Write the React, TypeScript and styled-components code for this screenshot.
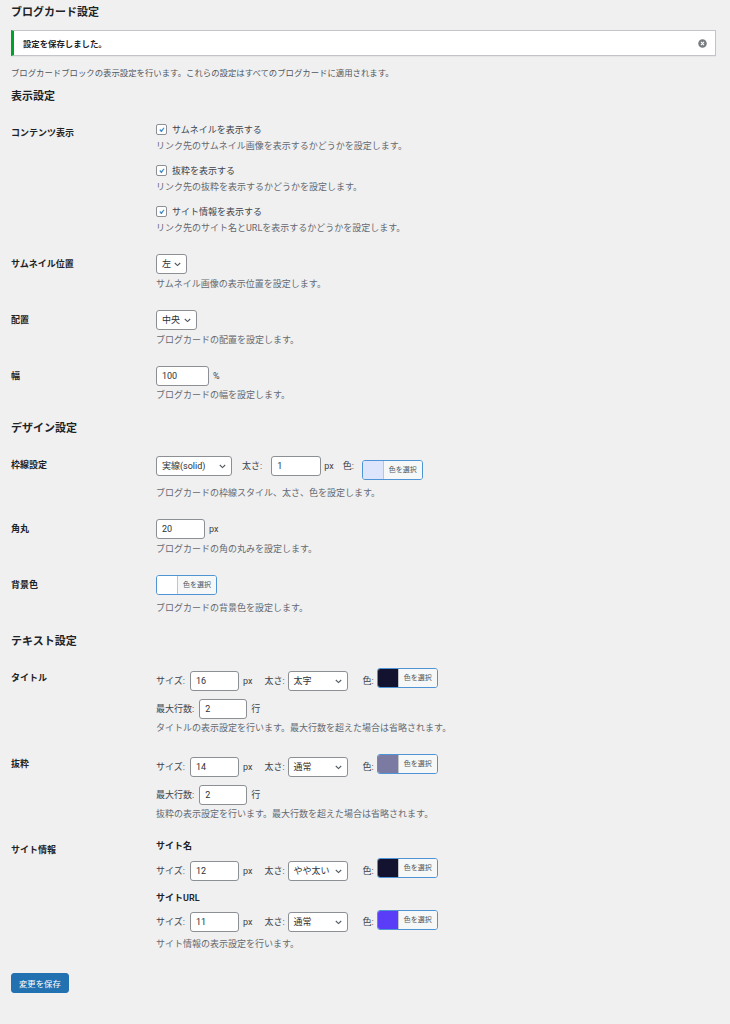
import React from 'react';
import styled, { createGlobalStyle } from 'styled-components';

const GlobalStyle = createGlobalStyle`
  body {
    margin: 0;
    background: #f0f0f1;
    font-family: Roboto, "Noto Sans CJK JP", "Noto Sans", sans-serif;
    color: #3c434a;
  }
  * { box-sizing: border-box; }
`;

const Wrap = styled.div`
  padding: 0 14px 30px 11px;
`;

const PageTitle = styled.h1`
  margin: 0;
  padding-top: 6px;
  font-size: 11px;
  line-height: 14px;
  font-weight: 600;
  color: #1d2327;
`;

const Notice = styled.div`
  margin-top: 10px;
  height: 26px;
  display: flex;
  align-items: center;
  background: #fff;
  border: 1px solid #c3c4c7;
  border-left: 3px solid #00a32a;
  box-shadow: 0 1px 1px rgba(0, 0, 0, 0.04);
  padding: 0 8px 0 9px;
  font-size: 8.4px;
  font-weight: 600;
  color: #1d2327;
`;

const Dismiss = styled.button`
  margin-left: auto;
  border: 0;
  padding: 0;
  background: none;
  display: flex;
  cursor: pointer;
`;

const Intro = styled.p`
  margin: 11px 0 0;
  font-size: 8.4px;
  line-height: 12px;
  color: #50575e;
`;

const SectionTitle = styled.h2`
  margin: 11px 0 9px;
  font-size: 11px;
  line-height: 14px;
  font-weight: 600;
  color: #1d2327;
`;

const Row = styled.div`
  display: flex;
  align-items: flex-start;
`;

const Th = styled.div`
  width: 135px;
  flex: none;
  padding-top: 13.5px;
  font-size: 9px;
  line-height: 12px;
  font-weight: 600;
  color: #1d2327;
`;

const Td = styled.div`
  flex: 1;
  padding: 10px 0 10px 10px;
  font-size: 9px;
  line-height: 12px;
  color: #3c434a;
`;

const Desc = styled.p<{ $mt?: number }>`
  margin: ${p => p.$mt ?? 4}px 0 0;
  font-size: 9px;
  line-height: 12px;
  color: #646970;
`;

const CheckOption = styled.div`
  & + & {
    margin-top: 12px;
  }
`;

const CheckLine = styled.label`
  display: flex;
  align-items: center;
  gap: 5px;
  height: 13px;
  color: #3c434a;
`;

const CheckBox = styled.span`
  width: 11px;
  height: 11px;
  border: 1px solid #8c8f94;
  border-radius: 2px;
  background: #fff;
  display: flex;
  align-items: center;
  justify-content: center;
`;

const ControlLine = styled.div<{ $mt?: number }>`
  display: flex;
  align-items: center;
  height: 20px;
  margin-top: ${p => p.$mt ?? 0}px;
`;

const Inline = styled.span<{ $ml?: number }>`
  margin-left: ${p => p.$ml ?? 0}px;
  white-space: nowrap;
  color: #3c434a;
`;

const SelectBox = styled.div<{ $w: number; $ml?: number }>`
  width: ${p => p.$w}px;
  margin-left: ${p => p.$ml ?? 0}px;
  height: 20px;
  flex: none;
  border: 1px solid #8c8f94;
  border-radius: 3px;
  background: #fff;
  display: flex;
  align-items: center;
  justify-content: space-between;
  padding: 0 5px;
  color: #2c3338;
  white-space: nowrap;
`;

const TextInput = styled.input<{ $w: number; $ml?: number }>`
  width: ${p => p.$w}px;
  margin: 0 0 0 ${p => p.$ml ?? 0}px;
  height: 20px;
  flex: none;
  border: 1px solid #8c8f94;
  border-radius: 3px;
  background: #fff;
  padding: 0 5px;
  font: inherit;
  font-size: 9px;
  color: #2c3338;
  outline: none;
`;

const ColorButton = styled.button<{ $ml?: number; $mt?: number }>`
  display: flex;
  align-self: flex-start;
  flex: none;
  height: 20px;
  margin: ${p => p.$mt ?? 0}px 0 0 ${p => p.$ml ?? 0}px;
  padding: 0;
  border: 1px solid #4f94d4;
  border-radius: 3px;
  overflow: hidden;
  background: #f6f7f7;
  cursor: pointer;
`;

const Swatch = styled.span<{ $color: string }>`
  width: 20px;
  background: ${p => p.$color};
`;

const ColorText = styled.span`
  padding: 0 5px;
  border-left: 1px solid #c3c4c7;
  font-family: Roboto, "Noto Sans CJK JP", sans-serif;
  font-size: 7px;
  line-height: 18px;
  color: #50575e;
  background: #f6f7f7;
`;

const SubHead = styled.div<{ $mt?: number }>`
  margin-top: ${p => p.$mt ?? 0}px;
  font-weight: 600;
  color: #1d2327;
  line-height: 12px;
`;

const SubmitButton = styled.button`
  margin-top: 13px;
  height: 20px;
  padding: 0 7px;
  border: 1px solid #2271b1;
  border-radius: 3px;
  background: #2271b1;
  color: #fff;
  font-family: Roboto, "Noto Sans CJK JP", sans-serif;
  font-size: 8.4px;
  cursor: pointer;
`;

const Chevron = () => (
  <svg width="7" height="5" viewBox="0 0 7 5">
    <path d="M0.8 1l2.7 2.6L6.2 1" stroke="#50575e" strokeWidth="1.1" fill="none" />
  </svg>
);

const Check = () => (
  <svg width="12" height="12" viewBox="0 0 20 20">
    <path d="M14.83 4.89l1.34.94-5.81 8.38H9.02L5.78 9.67l1.34-1.25 2.57 2.4z" fill="#3582c4" stroke="#3582c4" strokeWidth="0.6" />
  </svg>
);

const Select: React.FC<{ w: number; ml?: number; value: string }> = ({ w, ml, value }) => (
  <SelectBox $w={w} $ml={ml}>
    <span>{value}</span>
    <Chevron />
  </SelectBox>
);

const ColorPick: React.FC<{ color: string; ml?: number; mt?: number }> = ({ color, ml, mt }) => (
  <ColorButton $ml={ml} $mt={mt} type="button">
    <Swatch $color={color} />
    <ColorText>色を選択</ColorText>
  </ColorButton>
);

const TypeLine: React.FC<{ size: string; weight: string; color: string; mt?: number; cmt?: number }> = ({
  size,
  weight,
  color,
  mt,
  cmt,
}) => (
  <ControlLine $mt={mt}>
    <Inline>サイズ:</Inline>
    <TextInput $w={49} $ml={5} defaultValue={size} />
    <Inline $ml={4}>px</Inline>
    <Inline $ml={12}>太さ:</Inline>
    <Select w={60} ml={3} value={weight} />
    <Inline $ml={15}>色:</Inline>
    <ColorPick color={color} ml={3} mt={cmt} />
  </ControlLine>
);

const checks = [
  { label: 'サムネイルを表示する', desc: 'リンク先のサムネイル画像を表示するかどうかを設定します。' },
  { label: '抜粋を表示する', desc: 'リンク先の抜粋を表示するかどうかを設定します。' },
  { label: 'サイト情報を表示する', desc: 'リンク先のサイト名とURLを表示するかどうかを設定します。' },
];

const textRows = [
  { label: 'タイトル', size: '16', weight: '太字', color: '#13132f', desc: 'タイトルの表示設定を行います。最大行数を超えた場合は省略されます。' },
  { label: '抜粋', size: '14', weight: '通常', color: '#7a7aa2', desc: '抜粋の表示設定を行います。最大行数を超えた場合は省略されます。' },
];

const App: React.FC = () => {
  return (
    <Wrap>
      <GlobalStyle />
      <PageTitle>ブログカード設定</PageTitle>
      <Notice>
        <span>設定を保存しました。</span>
        <Dismiss type="button" aria-label="この通知を非表示にする">
          <svg width="9" height="9" viewBox="0 0 20 20">
            <circle cx="10" cy="10" r="9.5" fill="#787c82" />
            <path d="M6.6 6.6l6.8 6.8M13.4 6.6l-6.8 6.8" stroke="#fff" strokeWidth="2.4" />
          </svg>
        </Dismiss>
      </Notice>
      <Intro>ブログカードブロックの表示設定を行います。これらの設定はすべてのブログカードに適用されます。</Intro>

      <SectionTitle>表示設定</SectionTitle>
      <Row>
        <Th>コンテンツ表示</Th>
        <Td>
          {checks.map(c => (
            <CheckOption key={c.label}>
              <CheckLine>
                <CheckBox>
                  <Check />
                </CheckBox>
                {c.label}
              </CheckLine>
              <Desc>{c.desc}</Desc>
            </CheckOption>
          ))}
        </Td>
      </Row>
      <Row>
        <Th>サムネイル位置</Th>
        <Td>
          <ControlLine>
            <Select w={31} value="左" />
          </ControlLine>
          <Desc>サムネイル画像の表示位置を設定します。</Desc>
        </Td>
      </Row>
      <Row>
        <Th>配置</Th>
        <Td>
          <ControlLine>
            <Select w={41} value="中央" />
          </ControlLine>
          <Desc>ブログカードの配置を設定します。</Desc>
        </Td>
      </Row>
      <Row>
        <Th>幅</Th>
        <Td>
          <ControlLine>
            <TextInput $w={53} defaultValue="100" />
            <Inline $ml={4}>%</Inline>
          </ControlLine>
          <Desc $mt={3}>ブログカードの幅を設定します。</Desc>
        </Td>
      </Row>

      <SectionTitle>デザイン設定</SectionTitle>
      <Row>
        <Th>枠線設定</Th>
        <Td>
          <ControlLine $mt={1}>
            <Select w={76} value="実線(solid)" />
            <Inline $ml={10}>太さ:</Inline>
            <TextInput $w={50} $ml={9} defaultValue="1" />
            <Inline $ml={3}>px</Inline>
            <Inline $ml={9}>色:</Inline>
            <ColorPick color="#dde5fc" ml={8} mt={4} />
          </ControlLine>
          <Desc $mt={11}>ブログカードの枠線スタイル、太さ、色を設定します。</Desc>
        </Td>
      </Row>
      <Row>
        <Th>角丸</Th>
        <Td>
          <ControlLine>
            <TextInput $w={49} defaultValue="20" />
            <Inline $ml={4}>px</Inline>
          </ControlLine>
          <Desc>ブログカードの角の丸みを設定します。</Desc>
        </Td>
      </Row>
      <Row>
        <Th>背景色</Th>
        <Td>
          <ControlLine>
            <ColorPick color="#ffffff" />
          </ControlLine>
          <Desc $mt={7}>ブログカードの背景色を設定します。</Desc>
        </Td>
      </Row>

      <SectionTitle>テキスト設定</SectionTitle>
      {textRows.map(r => (
        <Row key={r.label}>
          <Th>{r.label}</Th>
          <Td>
            <TypeLine size={r.size} weight={r.weight} color={r.color} mt={3} cmt={-3} />
            <ControlLine $mt={8}>
              <Inline>最大行数:</Inline>
              <TextInput $w={48} $ml={5} defaultValue="2" />
              <Inline $ml={4}>行</Inline>
            </ControlLine>
            <Desc $mt={3}>{r.desc}</Desc>
          </Td>
        </Row>
      ))}
      <Row>
        <Th>サイト情報</Th>
        <Td>
          <SubHead>サイト名</SubHead>
          <TypeLine size="12" weight="やや太い" color="#13132f" mt={9} cmt={-3} />
          <SubHead $mt={11}>サイトURL</SubHead>
          <TypeLine size="11" weight="通常" color="#5a3ef7" mt={8} cmt={-2} />
          <Desc $mt={6}>サイト情報の表示設定を行います。</Desc>
        </Td>
      </Row>

      <SubmitButton type="button">変更を保存</SubmitButton>
    </Wrap>
  );
};

export default App;
